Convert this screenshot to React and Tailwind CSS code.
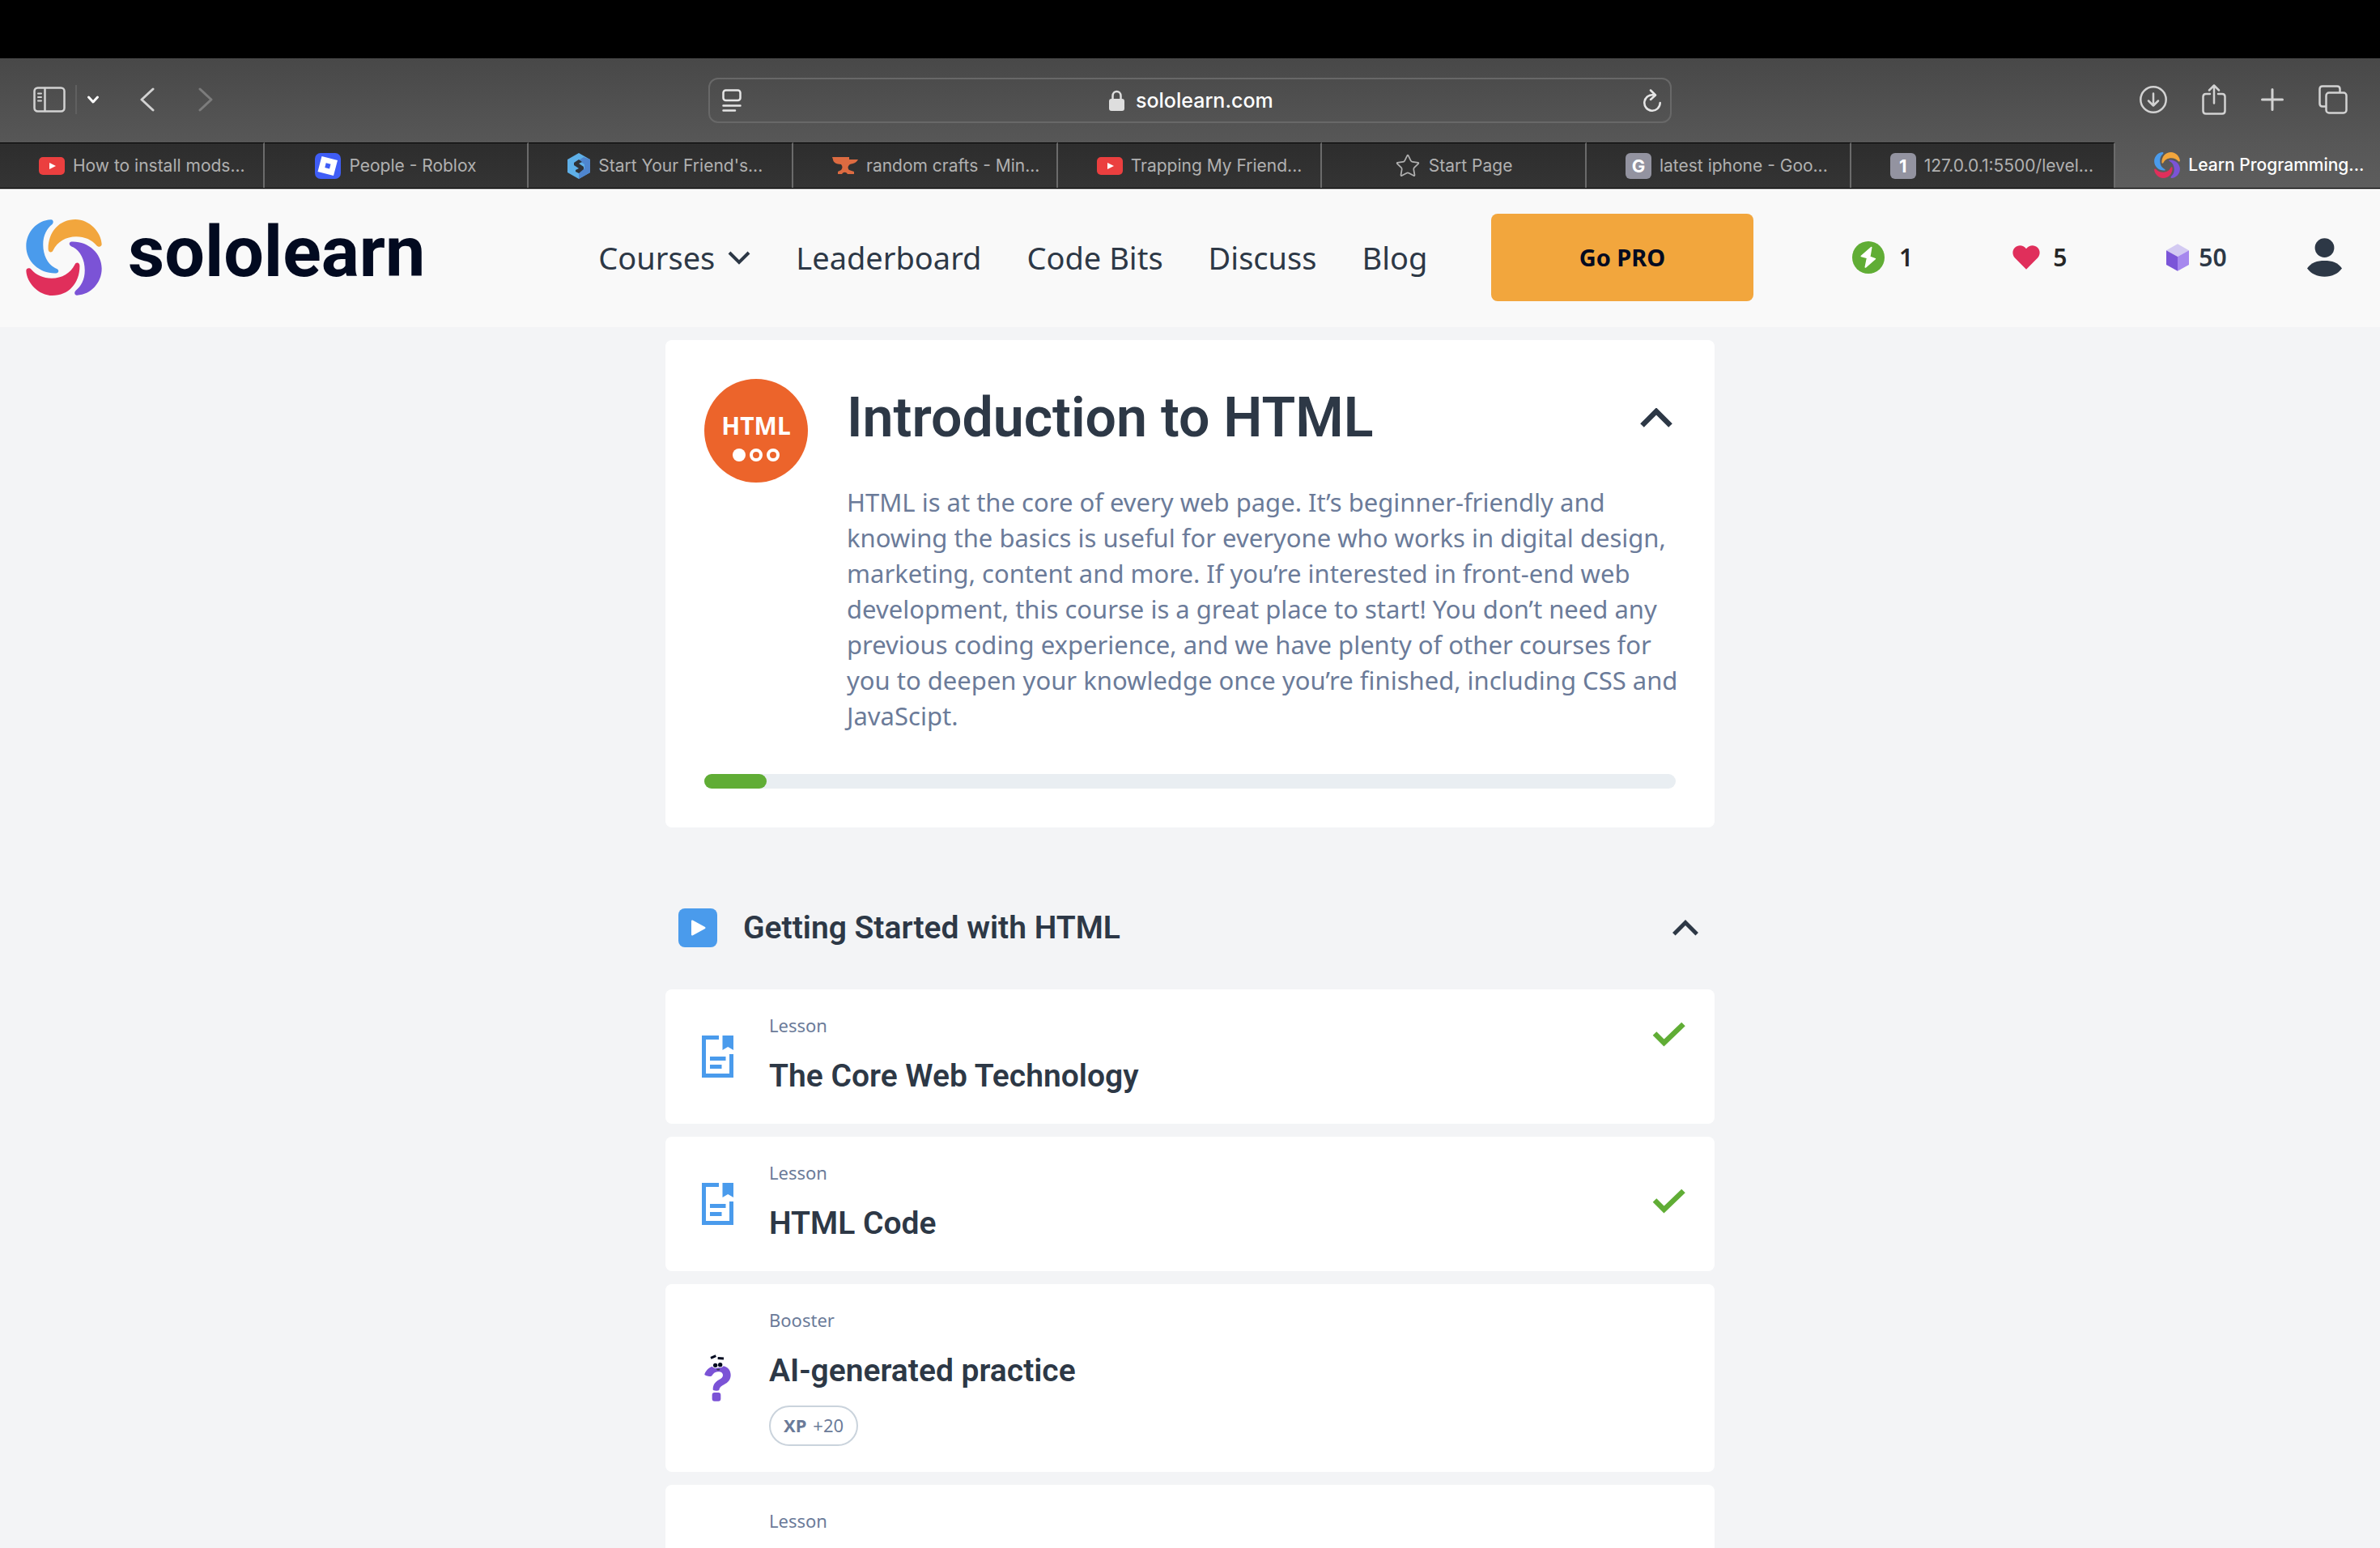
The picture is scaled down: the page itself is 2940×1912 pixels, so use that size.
import React from "react";
import { Star } from "lucide-react";

const BODY = "font-['Noto_Sans',sans-serif]";
const HEAD = "font-['Roboto',sans-serif]";

function SololearnMark({ className }) {
  const blade = "M128 48C76 50 36 95 36 147C36 204 86 249 147 247C155 247 159 240 154 234C151 230 146 229 141 226C116 212 99 181 99 141C99 105 113 81 133 65C140 58 136 47 128 48Z";
  const crest = "M219 47C160 47 118 92 118 157C118 171 132 172 136 162C152 130 184 111 222 111C254 111 280 123 298 144C304 151 317 150 317 139C315 95 272 47 219 47Z";
  return (
    <svg className={className} viewBox="36 47 281 283" aria-hidden="true">
      <path d={blade} fill="#4a9bec" />
      <path d={crest} fill="#f2a63d" />
      <path d={blade} fill="#7b53d6" transform="rotate(180 176.5 188.5)" />
      <path d={crest} fill="#e02f5b" transform="rotate(180 176.5 188.5)" />
    </svg>
  );
}

function YouTubeIcon() {
  return (
    <svg className="h-[22px] w-8 shrink-0" viewBox="0 0 32 22" aria-hidden="true">
      <rect width="32" height="22" rx="5" fill="#eb3f3f" />
      <path d="M13 7V15L21 11Z" fill="#fff" />
    </svg>
  );
}

function RobloxIcon() {
  return (
    <svg className="size-8 shrink-0" viewBox="0 0 32 32" aria-hidden="true">
      <rect width="32" height="32" rx="7" fill="#3f5df6" />
      <path fillRule="evenodd" fill="#fff" d="M8.500 4L28 9L23 28L3.500 23ZM13.700 12.300L12.300 18L18 19.500L19.500 13.800Z" />
    </svg>
  );
}

function HexIcon() {
  return (
    <svg className="h-8 w-7 shrink-0" viewBox="0 0 28 32" aria-hidden="true">
      <path d="M14 0L28 8V24L14 32L0 24V8Z" fill="#5fb0e8" />
      <path d="M28 8V24L14 32V24L21 19V14L14 9L20 5Z" fill="#4f86cf" />
      <path d="M14 8L8 12V15L14 19L10 21V23L14 25L20 20V17L14 13L18 11Z" fill="#2f3236" />
    </svg>
  );
}

function AnvilIcon() {
  return (
    <svg className="h-[22px] w-8 shrink-0" viewBox="0 0 32 22" aria-hidden="true">
      <path d="M0 0H21V3H32C30 7 26 8 22 9C19 11 19 14 21 16L27 18V21H19C17 18 14 18 12 21H7V18L11 16C13 14 13 11 11 9C5 9 1 6 1 3Z" fill="#dd6b41" />
    </svg>
  );
}

function LetterIcon({ children }) {
  return (
    <span className="flex size-8 shrink-0 items-center justify-center rounded-md bg-[#9393a0] text-[22px] leading-none font-bold text-white">
      {children}
    </span>
  );
}

const TABS = [
  { icon: <YouTubeIcon />, label: "How to install mods...", long: true },
  { icon: <RobloxIcon />, label: "People - Roblox" },
  { icon: <HexIcon />, label: "Start Your Friend's...", long: true },
  { icon: <AnvilIcon />, label: "random crafts - Min...", long: true },
  { icon: <YouTubeIcon />, label: "Trapping My Friend...", long: true },
  { icon: <Star className="size-8 shrink-0 text-[#b0b0b0]" strokeWidth={1.3} strokeLinejoin="miter" />, label: "Start Page" },
  { icon: <LetterIcon>G</LetterIcon>, label: "latest iphone - Goo...", long: true },
  { icon: <LetterIcon>1</LetterIcon>, label: "127.0.0.1:5500/level...", long: true },
  { icon: <SololearnMark className="size-8 shrink-0" />, label: "Learn Programming...", long: true, active: true },
];

function Toolbar() {
  const stroke = { fill: "none", stroke: "#d2d2d2", strokeWidth: 2.5, strokeLinecap: "round", strokeLinejoin: "round" };
  return (
    <div className="grid h-[104px] grid-cols-[1fr_minmax(0,1190px)_1fr] items-center bg-linear-to-b from-[#484848] to-[#575757]">
      <div className="flex items-center pb-0.5 pl-[41px]">
        <button aria-label="Show sidebar">
          <svg className="h-8 w-10" viewBox="0 0 40 32" {...stroke}>
            <rect x="1.500" y="1.500" width="37" height="29" rx="4" />
            <path d="M14.500 2V30" />
            <path d="M6 8.500H10M6 13H10M6 17.500H10" strokeWidth="2" />
          </svg>
        </button>
        <span className="ml-3 h-9 w-0.5 bg-[#606060]" />
        <button aria-label="Tab groups" className="ml-3">
          <svg className="h-3 w-4" viewBox="0 0 16 12" {...stroke} stroke="#fff" strokeWidth="3">
            <path d="M2.500 3L8 9L13.500 3" />
          </svg>
        </button>
        <button aria-label="Back" className="ml-[49px]">
          <svg className="h-[30px] w-5" viewBox="0 0 20 30" {...stroke} strokeWidth="3">
            <path d="M17 2L3 15L17 28" />
          </svg>
        </button>
        <button aria-label="Forward" className="ml-[52px]">
          <svg className="h-[30px] w-5" viewBox="0 0 20 30" {...stroke} stroke="#7c7c7c" strokeWidth="3">
            <path d="M3 2L17 15L3 28" />
          </svg>
        </button>
      </div>
      <div className="flex h-14 items-center rounded-xl border-2 border-[#686868] pr-2.5 pl-[15px]">
        <button aria-label="Page menu">
          <svg className="h-7 w-6" viewBox="0 0 24 28" {...stroke} stroke="#e6e6e6">
            <rect x="1.500" y="1.500" width="21" height="12.500" rx="3" />
            <path d="M1.500 20.500H22.500M1.500 26.500H16" />
          </svg>
        </button>
        <div className="flex flex-1 items-center justify-center gap-3.5">
          <svg className="h-[26px] w-[19px]" viewBox="0 0 19 26" aria-hidden="true">
            <rect y="11" width="19" height="15" rx="3" fill="#dedede" />
            <path d="M4.500 12V7.500C4.500 0 14.500 0 14.500 7.500V12" fill="none" stroke="#dedede" strokeWidth="2.500" />
          </svg>
          <input aria-label="Address" defaultValue="sololearn.com" className="w-[172px] bg-transparent text-[25px] leading-8 font-medium text-white outline-none" />
        </div>
        <button aria-label="Reload">
          <svg className="h-7 w-6" viewBox="0 0 24 28" {...stroke} stroke="#e6e6e6">
            <path d="M14 7.500A9.700 9.700 0 1 0 21.700 17M10 1.500L16 7.500L10 13" />
          </svg>
        </button>
      </div>
      <div className="flex items-center justify-end gap-[43px] pr-10 pb-0.5">
        <button aria-label="Downloads">
          <svg className="size-[34px]" viewBox="0 0 34 34" {...stroke}>
            <circle cx="17" cy="17" r="15.700" />
            <path d="M17 9.500V24.500M11 18.500L17 24.500L23 18.500" />
          </svg>
        </button>
        <button aria-label="Share">
          <svg className="h-[38px] w-[30px]" viewBox="0 0 30 38" {...stroke}>
            <path d="M10 12H5Q1.500 12 1.500 15.500V33Q1.500 36.500 5 36.500H25Q28.500 36.500 28.500 33V15.500Q28.500 12 25 12H20M15 23.500V1.500M9 7.500L15 1.500L21 7.500" />
          </svg>
        </button>
        <button aria-label="New tab">
          <svg className="size-7" viewBox="0 0 28 28" {...stroke} strokeWidth="3">
            <path d="M14 1.500V26.500M1.500 14H26.500" />
          </svg>
        </button>
        <button aria-label="Tab overview">
          <svg className="size-9" viewBox="0 0 36 36" {...stroke}>
            <path d="M8.500 26.500H5Q1.500 26.500 1.500 23V5Q1.500 1.500 5 1.500H23Q26.500 1.500 26.500 5V8.500" />
            <rect x="9.500" y="9.500" width="25" height="25" rx="3.500" />
          </svg>
        </button>
      </div>
    </div>
  );
}

function TabBar() {
  return (
    <div role="tablist" className="grid h-[57px] grid-cols-9 border-b border-black">
      {TABS.map((tab) => (
        <button
          key={tab.label}
          role="tab"
          aria-selected={Boolean(tab.active)}
          className={
            (tab.active
              ? "bg-linear-to-b from-[#575757] to-[#5d5d5d] font-medium text-white "
              : "border-t border-r-2 border-t-black border-r-[#6b6b6b] bg-linear-to-b from-[#2d2d2d] to-[#343434] text-[#b0b0b0] ") +
            (tab.long ? "justify-start pl-12 " : "justify-center ") +
            "flex min-w-0 items-center gap-2.5 text-[21px] leading-7 whitespace-nowrap"
          }
        >
          {tab.icon}
          {tab.label}
        </button>
      ))}
    </div>
  );
}

function Header() {
  return (
    <header className={`flex h-[171px] items-center border-t border-[#b9b9b9] bg-[#f9f9f9] pr-[42px] pb-[3px] pl-8 ${BODY}`}>
      <a href="#home" className="flex items-center gap-8">
        <SololearnMark className="size-[94px]" />
        <span className={`pb-3.5 text-[88px] leading-[104px] font-bold text-[#020a20] ${HEAD}`}>sololearn</span>
      </a>
      <nav className="ml-[214px] flex items-center gap-14 text-[38px] leading-[50px] text-[#2d3846]">
        <button className="flex items-center gap-4">
          Courses
          <svg className="h-5 w-7" viewBox="0 0 28 20" fill="none" stroke="#2d3846" strokeWidth="4" aria-hidden="true">
            <path d="M2 4L14 16L26 4" />
          </svg>
        </button>
        <a href="#leaderboard">Leaderboard</a>
        <a href="#code-bits">Code Bits</a>
        <a href="#discuss">Discuss</a>
        <a href="#blog">Blog</a>
      </nav>
      <button className="ml-auto h-[108px] w-[324px] rounded-lg bg-[#f2a63d] text-[29px] font-bold text-[#020a20]">Go PRO</button>
      <div className="ml-[122px] flex w-[610px] items-center gap-[123px] text-[30px] leading-10 font-semibold text-[#262626]">
        <button className="flex items-center gap-[18px]">
          <svg className="size-10" viewBox="54 54 120 120" aria-hidden="true">
            <circle cx="114" cy="114" r="60" fill="#60ad35" />
            <path d="M125 77L88 109L110 115L103 150L139 119L119 112Z" fill="#fff" stroke="#fff" strokeWidth="5" strokeLinejoin="round" />
          </svg>
          1
        </button>
        <button className="flex items-center gap-4">
          <svg className="h-[30px] w-[34px]" viewBox="637 68 102 91" aria-hidden="true">
            <path d="M688 158L646 116C634 102 636 86 645 77C658 65 677 67 688 81C699 67 718 65 731 77C740 86 742 102 730 116Z" fill="#e02f5b" />
          </svg>
          5
        </button>
        <button className="flex items-center gap-3 text-[#2d3846]">
          <svg className="h-[34px] w-7" viewBox="1218 65 84 100" aria-hidden="true">
            <path d="M1260 65L1302 89L1260 112L1218 89Z" fill="#d3caf2" />
            <path d="M1218 89L1260 112V165L1218 142Z" fill="#7b55d8" />
            <path d="M1302 89L1260 112V165L1302 142Z" fill="#a688ee" />
          </svg>
          50
        </button>
        <button aria-label="Profile" className="-ml-6">
          <svg className="h-12 w-[43px]" viewBox="763 624 130 144" fill="#2d3846">
            <circle cx="828" cy="660" r="36" />
            <path d="M763 737C778 714 800 708 828 708C856 708 878 714 893 737C878 757 856 768 828 768C800 768 778 757 763 737Z" />
          </svg>
        </button>
      </div>
    </header>
  );
}

function ChevronUp() {
  return (
    <svg className="h-6 w-10" viewBox="0 0 40 24" fill="none" stroke="#2d3846" aria-hidden="true">
      <path d="M2.500 21.500L20 4L37.500 21.500" strokeWidth="6.500" />
    </svg>
  );
}

function SmallChevronUp() {
  return (
    <svg className="h-5 w-8" viewBox="0 0 32 20" fill="none" stroke="#2d3846" aria-hidden="true">
      <path d="M1.800 17.800L16 3.600L30.200 17.800" strokeWidth="5" />
    </svg>
  );
}

const DESCRIPTION = [
  "HTML is at the core of every web page. It’s beginner-friendly and",
  "knowing the basics is useful for everyone who works in digital design,",
  "marketing, content and more. If you’re interested in front-end web",
  "development, this course is a great place to start! You don’t need any",
  "previous coding experience, and we have plenty of other courses for",
  "you to deepen your knowledge once you’re finished, including CSS and",
  "JavaScipt.",
];

function CourseCard() {
  return (
    <section className="rounded-lg bg-white p-12">
      <div className="flex gap-12">
        <div className="flex size-32 shrink-0 flex-col items-center rounded-full bg-[#ec642b] pt-10 text-white">
          <span className="text-[30px] leading-9 font-bold">HTML</span>
          <span className="mt-2.5 flex gap-[5px]">
            <span className="size-4 rounded-full bg-white" />
            <span className="size-4 rounded-full border-4 border-white" />
            <span className="size-4 rounded-full border-4 border-white" />
          </span>
        </div>
        <div className="min-w-0 flex-1">
          <div className="flex items-center justify-between">
            <h1 className={`text-[68px] leading-24 font-semibold text-[#2d3846] ${HEAD}`}>Introduction to HTML</h1>
            <button aria-label="Collapse course" className="flex size-12 items-center justify-center">
              <ChevronUp />
            </button>
          </div>
          <p className="mt-[34px] text-[31px] leading-11 whitespace-nowrap text-[#6b7b99]">
            {DESCRIPTION.map((line) => (
              <span key={line} className="block">{line}</span>
            ))}
          </p>
        </div>
      </div>
      <div role="progressbar" aria-label="Course progress" aria-valuenow={6} className="mt-[50px] h-[18px] rounded-full bg-[#e9eef2]">
        <div className="h-full rounded-full bg-[#60ad35]" style={{ width: "6.4%" }} />
      </div>
    </section>
  );
}

function LessonIcon() {
  return (
    <svg className="h-[52px] w-[39px]" viewBox="0 0 39 52" fill="#4a9bec" aria-hidden="true">
      <path d="M0 0H21V5H5V47H34V23H39V52H0Z" />
      <path d="M25.500 0H39V18L32.200 14L25.500 18Z" />
      <path d="M10 26H29.500V31H10ZM10 36H24.500V41H10Z" />
    </svg>
  );
}

function BoosterIcon() {
  return (
    <svg className="h-[58px] w-[33px]" viewBox="62 27 99 174" aria-hidden="true">
      <path d="M63 100C70 80 88 68 112 68C140 64 160 80 160 103C160 122 148 132 136 138C124 144 118 150 117 158C116 162 94 163 94 157C94 138 102 130 116 121C126 115 131 111 131 104C131 94 122 90 112 91C101 92 95 98 90 106C88 111 61 106 63 100Z" fill="#7b53d6" />
      <rect x="91" y="168" width="32" height="32" rx="9" fill="#7b53d6" />
      <path d="M88 58H135C138 70 128 77 119 76C113 75 113 77 108 77C96 80 87 72 88 58Z" fill="#fff" />
      <circle cx="103" cy="67" r="8" fill="#020a20" />
      <circle cx="121" cy="65" r="8" fill="#020a20" />
      <path d="M86 40L105 32M112 40.500L134 42" stroke="#020a20" strokeWidth="9" />
      <path d="M107 80H120C120 87 108 88 107 80Z" fill="#343b44" />
    </svg>
  );
}

function Check({ className }) {
  return (
    <svg className={`size-12 self-start ${className}`} viewBox="0 0 48 48" fill="none" role="img" aria-label="Completed">
      <path d="M6 22.500L17.500 34L41.500 11" stroke="#60ad35" strokeWidth="6.500" />
    </svg>
  );
}

function LessonRow({ icon, kind, title, xp, check }) {
  return (
    <li className="flex min-h-[166px] items-center rounded-lg bg-white pr-8">
      <div className="flex w-32 shrink-0 justify-center">{icon}</div>
      <div className="flex-1 self-start pt-7 pb-8">
        <p className="text-[22px] leading-8 text-[#6b7b99]">{kind}</p>
        {title && <h3 className={`mt-[22px] text-[39px] leading-[50px] font-semibold text-[#2d3846] ${HEAD}`}>{title}</h3>}
        {xp && (
          <p className="mt-[18px] flex h-[50px] w-[110px] items-center justify-center gap-2 rounded-full border-2 border-[#cad3dc] pb-0.5 text-[22px] text-[#6b7b99]">
            <b>XP</b>
            <span>{xp}</span>
          </p>
        )}
      </div>
      {check}
    </li>
  );
}

export default function App() {
  return (
    <div className="h-screen overflow-hidden bg-[#f3f4f6] font-['Inter',sans-serif]">
      <div className="h-[72px] bg-black" />
      <Toolbar />
      <TabBar />
      <Header />
      <main className={`mx-auto max-w-[1296px] pt-4 ${BODY}`}>
        <CourseCard />
        <section>
          <div className="flex items-center gap-8 px-4 pt-[100px] pb-[52px]">
            <svg className="size-12" viewBox="0 0 48 48" aria-hidden="true">
              <rect width="48" height="48" rx="8" fill="#4a9bec" />
              <path d="M17 15.500V32.500L32.500 24Z" fill="#fff" stroke="#fff" strokeWidth="2" strokeLinejoin="round" />
            </svg>
            <h2 className={`flex-1 text-[39px] leading-12 font-semibold text-[#2d3846] ${HEAD}`}>Getting Started with HTML</h2>
            <button aria-label="Collapse module" className="flex size-10 items-center justify-center">
              <SmallChevronUp />
            </button>
          </div>
          <ul className="flex flex-col gap-4">
            <LessonRow icon={<LessonIcon />} kind="Lesson" title="The Core Web Technology" check={<Check className="mt-8" />} />
            <LessonRow icon={<LessonIcon />} kind="Lesson" title="HTML Code" check={<Check className="mt-14" />} />
            <LessonRow icon={<BoosterIcon />} kind="Booster" title="AI-generated practice" xp="+20" />
            <LessonRow kind="Lesson" />
          </ul>
        </section>
      </main>
    </div>
  );
}
